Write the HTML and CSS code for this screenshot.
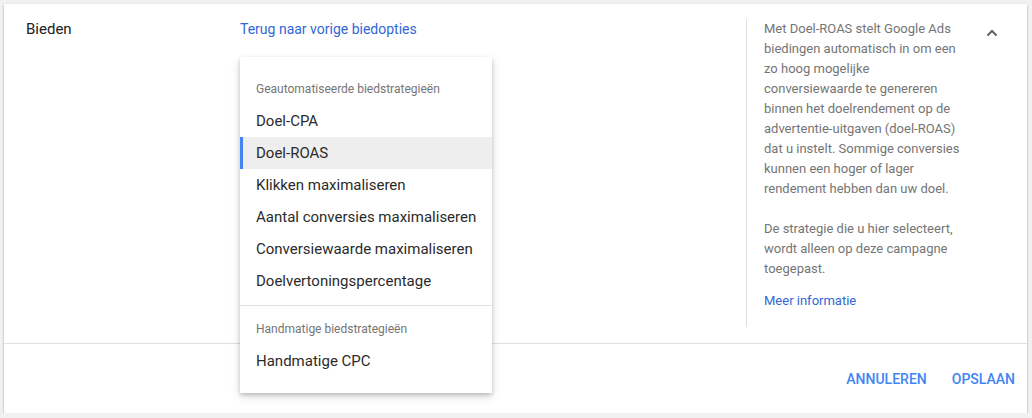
FILE: index.html
```html
<!DOCTYPE html>
<html lang="nl">
<head>
<meta charset="utf-8">
<title>Bieden</title>
<link rel="stylesheet" href="styles.css">
</head>
<body>
<div class="card">
  <div class="main">
    <div class="label">Bieden</div>
    <div class="middle">
      <a class="back-link" href="#">Terug naar vorige biedopties</a>
      <div class="menu">
        <div class="menu-header">Geautomatiseerde biedstrategieën</div>
        <div class="menu-item">Doel-CPA</div>
        <div class="menu-item selected">Doel-ROAS</div>
        <div class="menu-item">Klikken maximaliseren</div>
        <div class="menu-item">Aantal conversies maximaliseren</div>
        <div class="menu-item">Conversiewaarde maximaliseren</div>
        <div class="menu-item">Doelvertoningspercentage</div>
        <div class="menu-divider"></div>
        <div class="menu-header">Handmatige biedstrategieën</div>
        <div class="menu-item">Handmatige CPC</div>
      </div>
    </div>
    <div class="info">
      <p>Met Doel-ROAS stelt Google Ads biedingen automatisch in om een zo hoog mogelijke conversiewaarde te genereren binnen het doelrendement op de advertentie-uitgaven (doel-ROAS) dat u instelt. Sommige conversies kunnen een hoger of lager rendement hebben dan uw doel.</p>
      <p class="last">De strategie die u hier selecteert, wordt alleen op deze campagne toegepast.</p>
      <a class="more" href="#">Meer informatie</a>
    </div>
    <div class="toggle">
      <svg width="12" height="8" viewBox="0 0 12 8"><path d="M1.5 6.5 L6 2 L10.5 6.5" fill="none" stroke="#5f6368" stroke-width="2"/></svg>
    </div>
  </div>
  <div class="footer">
    <button class="btn">Annuleren</button>
    <button class="btn">Opslaan</button>
  </div>
</div>
</body>
</html>
```
FILE: styles.css
```css
html, body {
  margin: 0;
  padding: 0;
  background: #f1f1f1;
  font-family: Roboto, "Liberation Sans", Arial, sans-serif;
}
.card {
  margin: 4px 0 0 4px;
  width: 1023px;
  height: 409px;
  background: #fff;
  box-shadow: 0 1px 2px rgba(0,0,0,0.35);
  display: flex;
  flex-direction: column;
}
.main {
  height: 340px;
  display: flex;
  padding-top: 15px;
  box-sizing: border-box;
  border-bottom: 1px solid #e0e0e0;
}
.label {
  width: 214px;
  padding-left: 22px;
  font-size: 15px;
  line-height: 20px;
  color: #212121;
}
.middle {
  position: relative;
  width: 506px;
}
.back-link {
  font-size: 14px;
  line-height: 20px;
  color: #3367d6;
  text-decoration: none;
}
.menu {
  position: absolute;
  top: 38px;
  left: 0;
  width: 252px;
  padding: 16px 0;
  background: #fff;
  box-shadow: 0 2px 4px rgba(0,0,0,0.2), 0 4px 10px rgba(0,0,0,0.12);
  z-index: 2;
}
.menu-header {
  height: 32px;
  line-height: 32px;
  padding-left: 16px;
  font-size: 12px;
  color: #757575;
}
.menu-item {
  height: 32px;
  line-height: 32px;
  padding-left: 16px;
  font-size: 15px;
  color: #2b2b2b;
  white-space: nowrap;
}
.menu-item.selected {
  background: #eeeeee;
  box-shadow: inset 3px 0 0 #4285f4;
}
.menu-divider {
  height: 1px;
  background: #e0e0e0;
  margin: 8px 0 7px;
}
.info {
  align-self: flex-start;
  width: 200px;
  padding: 0 0 16px 17px;
  border-left: 1px solid #e0e0e0;
  font-size: 13px;
  line-height: 20px;
  color: #757575;
}
.info p {
  margin: 0 0 20px;
}
.info p.last {
  margin-bottom: 12px;
}
.more {
  color: #3367d6;
  text-decoration: none;
}
.toggle {
  margin-left: 20px;
  padding-top: 10px;
  width: 16px;
  display: flex;
  justify-content: center;
  align-items: flex-start;
}
.toggle svg {
  display: block;
}
.footer {
  flex: 1;
  display: flex;
  justify-content: flex-end;
  align-items: center;
  gap: 25px;
  padding: 0 12px 0 0;
}
.btn {
  border: none;
  background: none;
  padding: 0;
  font-family: Roboto, "Liberation Sans", Arial, sans-serif;
  font-size: 14px;
  font-weight: 500;
  text-transform: uppercase;
  color: #4285f4;
  line-height: 20px;
}
```
